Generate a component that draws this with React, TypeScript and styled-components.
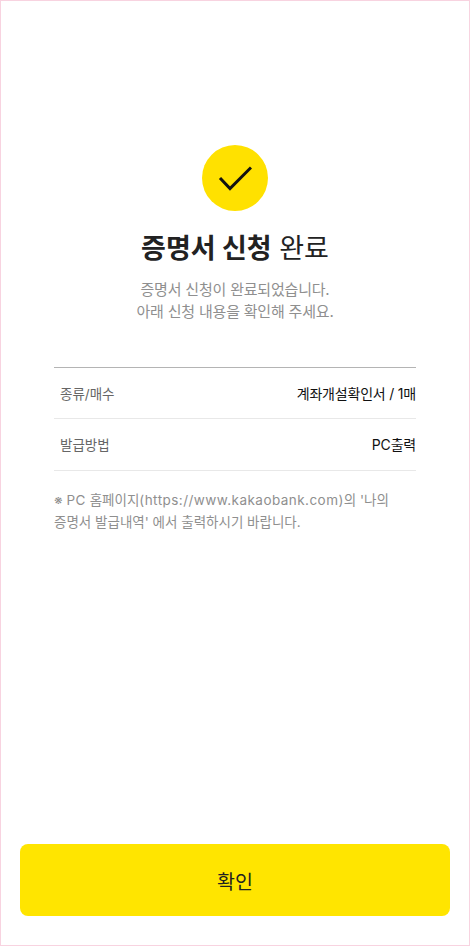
import styled, { createGlobalStyle } from 'styled-components';

const GlobalStyle = createGlobalStyle`
  html, body {
    margin: 0;
    padding: 0;
    background: #fff;
  }
  * {
    box-sizing: border-box;
  }
`;

const Screen = styled.div`
  width: 470px;
  height: 946px;
  display: flex;
  flex-direction: column;
  background: #fff;
  border: 1px solid #f8d3e0;
  font-family: 'Inter', 'Noto Sans CJK KR', sans-serif;
`;

const Content = styled.main`
  flex: 1;
  display: flex;
  flex-direction: column;
  padding: 144px 53px 0;
`;

const Header = styled.section`
  display: flex;
  flex-direction: column;
  align-items: center;
`;

const Badge = styled.div`
  width: 66px;
  height: 66px;
  border-radius: 50%;
  background: #ffe100;
  display: flex;
  align-items: center;
  justify-content: center;
`;

const Title = styled.h1`
  margin: 20px 0 0;
  font-size: 27px;
  line-height: 36px;
  font-weight: 400;
  color: #222;

  strong {
    font-weight: 700;
  }
`;

const Subtitle = styled.p`
  margin: 12px 0 0;
  font-size: 15px;
  line-height: 22px;
  letter-spacing: -0.2px;
  color: #8f8f8f;
  text-align: center;
`;

const Details = styled.dl`
  margin: 44px 0 0;
  border-top: 1px solid #b4b4b4;
`;

const Row = styled.div`
  height: 51.3px;
  display: flex;
  align-items: center;
  justify-content: space-between;
  padding: 0 0 0 6px;
  border-bottom: 1px solid #e8e8e8;
`;

const Label = styled.dt`
  font-size: 13.5px;
  color: #666;
`;

const Value = styled.dd`
  margin: 0;
  font-size: 14px;
  letter-spacing: -0.2px;
  color: #111;
`;

const Note = styled.p`
  margin: 18.4px 0 0;
  font-size: 13.5px;
  line-height: 22px;
  color: #8f8f8f;
`;

const Latin = styled.span`
  letter-spacing: 0.45px;
`;

const Footer = styled.footer`
  padding: 0 19px 29px;
`;

const ConfirmButton = styled.button`
  width: 100%;
  height: 72px;
  border: 0;
  border-radius: 8px;
  background: #ffe500;
  color: #222;
  font-family: inherit;
  font-size: 19.5px;
`;

export default function App() {
  return (
    <Screen>
      <GlobalStyle />
      <Content>
        <Header>
          <Badge>
            <svg width="34" height="26" viewBox="0 0 34 26" fill="none">
              <path d="M2 13 L12 23.5 L33 2.5" stroke="#111" strokeWidth="3" />
            </svg>
          </Badge>
          <Title>
            <strong>증명서 신청</strong> 완료
          </Title>
          <Subtitle>
            증명서 신청이 완료되었습니다.
            <br />
            아래 신청 내용을 확인해 주세요.
          </Subtitle>
        </Header>
        <Details>
          <Row>
            <Label>종류/매수</Label>
            <Value>계좌개설확인서 / 1매</Value>
          </Row>
          <Row>
            <Label>발급방법</Label>
            <Value>PC출력</Value>
          </Row>
        </Details>
        <Note>
          ※ <Latin>PC</Latin> 홈페이지<Latin>(https://www.kakaobank.com)</Latin>의 '나의
          <br />
          증명서 발급내역' 에서 출력하시기 바랍니다.
        </Note>
      </Content>
      <Footer>
        <ConfirmButton>확인</ConfirmButton>
      </Footer>
    </Screen>
  );
}
